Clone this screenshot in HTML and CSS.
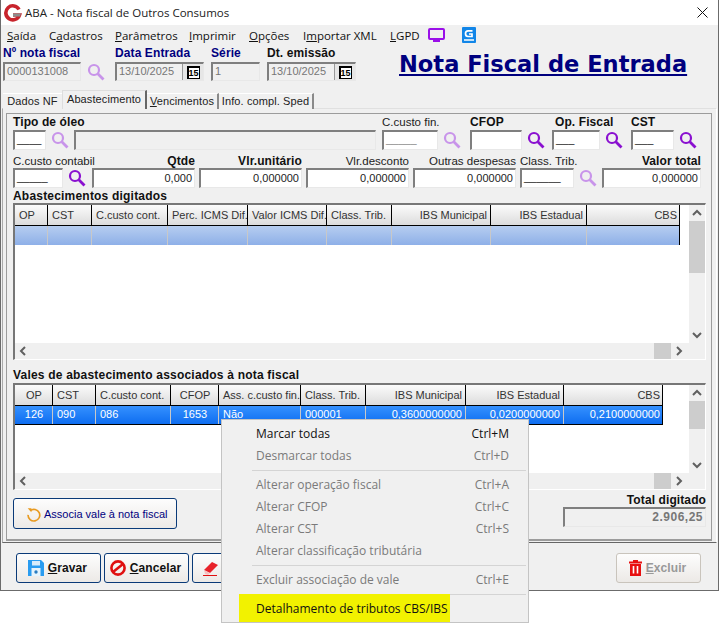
FILE: index.html
```html
<!DOCTYPE html>
<html lang="pt">
<head>
<meta charset="utf-8">
<title>ABA - Nota fiscal de Outros Consumos</title>
<link rel="stylesheet" href="styles.css">
</head>
<body>
<svg class="defs" width="0" height="0">
  <symbol id="lens" viewBox="0 0 18 18"><circle cx="7" cy="7" r="5" fill="none" stroke="currentColor" stroke-width="2.2"/><path d="M10.8 10.8 L16.5 16.5" stroke="currentColor" stroke-width="2.8" fill="none"/></symbol>
  <symbol id="up" viewBox="-3 -3 16 16"><path d="M1 7 L5 3 L9 7" fill="none" stroke="#606060" stroke-width="2"/></symbol>
  <symbol id="down" viewBox="-3 -3 16 16"><path d="M1 3 L5 7 L9 3" fill="none" stroke="#606060" stroke-width="2"/></symbol>
  <symbol id="left" viewBox="-3 -3 16 16"><path d="M7 1 L3 5 L7 9" fill="none" stroke="#606060" stroke-width="2"/></symbol>
  <symbol id="right" viewBox="-3 -3 16 16"><path d="M3 1 L7 5 L3 9" fill="none" stroke="#606060" stroke-width="2"/></symbol>
</svg>
<div class="window">
  <div class="titlebar">
    <svg class="applogo" viewBox="0 0 18 18" width="18" height="18"><path d="M15 5.5 A7 7 0 1 0 15.5 11 L9 11" fill="none" stroke="#c8242c" stroke-width="3.6"/><path d="M9 9.5 L17 9.5 L16 12.5 L9 12.5 Z" fill="#8d8d8d"/></svg>
    <span class="title-text">ABA - Nota fiscal de Outros Consumos</span>
    <svg class="close" viewBox="0 0 11 11" width="11" height="11"><path d="M0.5 0.5 L10.5 10.5 M10.5 0.5 L0.5 10.5" stroke="#111" stroke-width="1" fill="none"/></svg>
  </div>
  <nav class="menubar">
    <span class="m1"><u>S</u>aída</span>
    <span class="m2">C<u>a</u>dastros</span>
    <span class="m3"><u>P</u>arâmetros</span>
    <span class="m4"><u>I</u>mprimir</span>
    <span class="m5"><u>O</u>pções</span>
    <span class="m6">I<u>m</u>portar XML</span>
    <span class="m7"><u>L</u>GPD</span>
    <svg class="monitor" viewBox="0 0 17 14" width="17" height="14"><rect x="1" y="1" width="15" height="10" rx="1" fill="none" stroke="#9a10e8" stroke-width="2"/><path d="M5 13 H12" stroke="#9a10e8" stroke-width="2"/></svg>
    <svg class="gbook" viewBox="0 0 14 16" width="14" height="16"><rect width="14" height="16" rx="1" fill="#1286e8"/><path d="M10.5 3.8 H6 Q3.5 3.8 3.5 6.5 Q3.5 9.5 6 9.5 H10 V7 H7" fill="none" stroke="#fff" stroke-width="1.7"/><path d="M2 13 H12" stroke="#fff" stroke-width="1.5"/></svg>
  </nav>
  <header class="head">
    <div class="fld h-num"><label class="bl navy">Nº nota fiscal</label><div class="inp dis">0000131008</div></div>
    <svg class="ic light h-lens"><use href="#lens"/></svg>
    <div class="fld h-date"><label class="bl navy">Data Entrada</label><div class="inp dis datebox"><span>13/10/2025</span><b class="cal"><i>15</i></b></div></div>
    <div class="fld h-serie"><label class="bl navy">Série</label><div class="inp dis">1</div></div>
    <div class="fld h-date h-emis"><label class="bl">Dt. emissão</label><div class="inp dis datebox"><span>13/10/2025</span><b class="cal"><i>15</i></b></div></div>
    <h1 class="bigtitle">Nota Fiscal de Entrada</h1>
  </header>
  <div class="tabs">
    <span class="tab t1">Dados NF</span>
    <span class="tab t2 active">Abastecimento</span>
    <span class="tab t3"><u>V</u>encimentos</span>
    <span class="tab t4">Info. compl. Sped</span>
  </div>
  <section class="pane">
    <div class="group">
      <div class="row row1">
        <div class="fld"><label class="bl">Tipo de óleo</label><div class="inp mask">____</div></div>
        <div class="iccell"><svg class="ic light"><use href="#lens"/></svg></div>
        <div class="fld"><label class="nl">&nbsp;</label><div class="inp dis"></div></div>
        <div></div>
        <div class="fld"><label class="nl">C.custo fin.</label><div class="inp mask grayt">_____</div></div>
        <div class="iccell"><svg class="ic light"><use href="#lens"/></svg></div>
        <div class="fld"><label class="bl">CFOP</label><div class="inp"></div></div>
        <div class="iccell"><svg class="ic"><use href="#lens"/></svg></div>
        <div class="fld"><label class="bl lab-op">Op. Fiscal</label><div class="inp mask">___</div></div>
        <div class="iccell"><svg class="ic"><use href="#lens"/></svg></div>
        <div class="fld"><label class="bl">CST</label><div class="inp mask">___</div></div>
        <div class="iccell"><svg class="ic"><use href="#lens"/></svg></div>
      </div>
      <div class="row row2">
        <div class="fld"><label class="nl">C.custo contabil</label><div class="inp mask">_____</div></div>
        <div class="iccell"><svg class="ic"><use href="#lens"/></svg></div>
        <div class="fld"><label class="bl rt">Qtde</label><div class="inp num">0,000</div></div>
        <div></div>
        <div class="fld"><label class="bl rt">Vlr.unitário</label><div class="inp num">0,000000</div></div>
        <div></div>
        <div class="fld"><label class="nl rt">Vlr.desconto</label><div class="inp num">0,000000</div></div>
        <div></div>
        <div class="fld"><label class="nl rt">Outras despesas</label><div class="inp num">0,000000</div></div>
        <div></div>
        <div class="fld"><label class="nl">Class. Trib.</label><div class="inp mask">______</div></div>
        <div class="iccell"><svg class="ic light"><use href="#lens"/></svg></div>
        <div class="fld"><label class="bl rt">Valor total</label><div class="inp num">0,000000</div></div>
      </div>
      <div class="caption">Abastecimentos digitados</div>
      <div class="grid grid-a">
        <div class="gridbody">
          <div class="gr ghead cols-a">
            <span>OP</span><span>CST</span><span>C.custo cont.</span><span>Perc. ICMS Dif.</span><span>Valor ICMS Dif.</span><span>Class. Trib.</span><span class="r">IBS Municipal</span><span class="r">IBS Estadual</span><span class="r">CBS</span>
          </div>
          <div class="gr grow soft cols-a"><span></span><span></span><span></span><span></span><span></span><span></span><span></span><span></span><span></span></div>
        </div>
        <div class="vs"><svg class="ar"><use href="#up"/></svg><div class="thumb th-a"></div><div class="fill"></div><svg class="ar"><use href="#down"/></svg></div>
        <div class="hs"><svg class="ar"><use href="#left"/></svg><div class="fill"></div><div class="hthumb"></div><svg class="ar"><use href="#right"/></svg></div>
      </div>
      <div class="caption cap2">Vales de abastecimento associados à nota fiscal</div>
      <div class="grid grid-b">
        <div class="gridbody">
          <div class="gr ghead cols-b">
            <span class="c">OP</span><span>CST</span><span>C.custo cont.</span><span class="c">CFOP</span><span>Ass. c.custo fin.</span><span>Class. Trib.</span><span class="r">IBS Municipal</span><span class="r">IBS Estadual</span><span class="r">CBS</span>
          </div>
          <div class="gr grow strong cols-b">
            <span class="c">126</span><span>090</span><span>086</span><span class="c">1653</span><span>Não</span><span>000001</span><span class="r">0,3600000000</span><span class="r">0,0200000000</span><span class="r">0,2100000000</span>
          </div>
        </div>
        <div class="vs"><svg class="ar"><use href="#up"/></svg><div class="thumb th-b"></div><div class="fill"></div><svg class="ar"><use href="#down"/></svg></div>
        <div class="hs"><svg class="ar"><use href="#left"/></svg><div class="fill"></div><div class="hthumb"></div><svg class="ar"><use href="#right"/></svg></div>
      </div>
      <div class="assoc-row">
        <button class="btn assoc">
          <svg viewBox="0 0 18 18" width="15" height="18"><path d="M5 5 A7 7 0 1 1 2.5 10" fill="none" stroke="#e89a20" stroke-width="2"/><path d="M2 2 L6.5 2 L6.5 7 Z" fill="#e89a20"/></svg>
          <span>Associa vale à nota fiscal</span>
        </button>
        <div class="fld total"><label class="bl rt">Total digitado</label><div class="inp dis num totalbox">2.906,25</div></div>
      </div>
    </div>
  </section>
  <footer class="bar">
    <button class="btn act">
      <svg viewBox="0 0 16 16" width="16" height="16"><path d="M0 0 H13 L16 3 V16 H0 Z" fill="#2a9cf0"/><rect x="4" y="1" width="8" height="4.5" fill="#d8ecfa"/><rect x="3.5" y="8" width="9" height="8" fill="#e8f4fc"/><circle cx="8" cy="12" r="1.7" fill="#2a7cc0"/></svg>
      <span><u>G</u>ravar</span>
    </button>
    <button class="btn act">
      <svg viewBox="0 0 16 16" width="16" height="16"><circle cx="8" cy="8" r="6.6" fill="none" stroke="#e01010" stroke-width="2.6"/><path d="M3.3 11.8 L12.7 4.2" stroke="#e01010" stroke-width="2.6"/></svg>
      <span><u>C</u>ancelar</span>
    </button>
    <button class="btn act">
      <svg viewBox="0 0 16 16" width="16" height="16"><path d="M1 10 L9 2 L15 5 L7 13 Z" fill="#e8222a"/><path d="M1 10 L7 13 L5 15 L2 14 Z" fill="#f6c0c0"/><path d="M0 15.5 H14" stroke="#e01010"/></svg>
      <span><u>L</u>impar</span>
    </button>
    <div class="spacer"></div>
    <button class="btn act off">
      <svg viewBox="0 0 13 16" width="13" height="16"><path d="M0 1.5 H4 V0 H9 V1.5 H13 V3.5 H0 Z M1 4 H12 V16 H1 Z" fill="#e81010"/><path d="M4.5 6 V13.5 M8.5 6 V13.5" stroke="#fff" stroke-width="1.6"/></svg>
      <span><u>E</u>xcluir</span>
    </button>
  </footer>
  <div class="ctx">
    <div class="mi on"><span>Marcar todas</span><span>Ctrl+M</span></div>
    <div class="mi"><span>Desmarcar todas</span><span>Ctrl+D</span></div>
    <div class="sep"></div>
    <div class="mi"><span>Alterar operação fiscal</span><span>Ctrl+A</span></div>
    <div class="mi"><span>Alterar CFOP</span><span>Ctrl+C</span></div>
    <div class="mi"><span>Alterar CST</span><span>Ctrl+S</span></div>
    <div class="mi"><span>Alterar classificação tributária</span><span></span></div>
    <div class="sep"></div>
    <div class="mi"><span>Excluir associação de vale</span><span>Ctrl+E</span></div>
    <div class="sep"></div>
    <div class="mi on hl"><mark>Detalhamento de tributos CBS/IBS</mark></div>
  </div>
</div>
</body>
</html>
```
FILE: styles.css
```css
* { box-sizing: border-box; }
html, body { margin: 0; padding: 0; background: #fff; overflow: hidden; }
body { width: 720px; height: 627px; font-family: "Liberation Sans", Arial, sans-serif; font-size: 11px; color: #111; }
.defs { position: absolute; }
.window { position: relative; width: 719px; height: 591px; background: #f0f0f0; border: 1px solid #6b6b6b; border-top: 0; }

.titlebar { height: 25px; background: #fff; display: flex; align-items: center; padding: 0 10px 0 3px; font-family: "Open Sans", sans-serif; font-size: 11.5px; color: #222; }
.applogo { margin-right: 3px; }
.title-text { flex: 1; }

.menubar { height: 20px; display: flex; align-items: center; font-family: "Open Sans", sans-serif; font-size: 11.5px; color: #111; padding-left: 6px; }
.menubar span, .menubar svg { flex: none; }
.m1 { width: 42px; } .m2 { width: 66px; } .m3 { width: 74px; } .m4 { width: 60px; } .m5 { width: 54px; } .m6 { width: 87px; } .m7 { width: 38px; }
.monitor { margin-right: 17px; }

.head { height: 45px; display: flex; padding-top: 1px; padding-left: 2px; position: relative; }
.fld { display: flex; flex-direction: column; min-width: 0; }
label { display: block; height: 14px; line-height: 15px; white-space: nowrap; }
.bl { font-family: "Liberation Sans", sans-serif; font-weight: bold; font-size: 12px; letter-spacing: .1px; }
.nl { font-size: 11.5px; color: #222; }
.navy { color: #00007f; }
.rt { text-align: right; }
.lab-op { margin-left: 3px; }
.head label { height: 15px; line-height: 15px; }
.head .fld { gap: 1px; }
.h-num { width: 78px; }
.h-lens { margin: 17px 10px 0 6px; }
.h-date { width: 89px; margin-right: 7px; }
.h-serie { width: 49px; margin-right: 7px; }
.h-emis { margin-right: 0; }
.bigtitle { margin: 4px 0 0 43px; font-family: "DejaVu Sans", sans-serif; font-size: 22.55px; line-height: 28px; font-weight: bold; color: #00007f; text-decoration: underline; white-space: nowrap; }

.inp { height: 20px; background: #fff; border-style: solid; border-width: 2px 1px 1px 2px; border-color: #7f7f7f #e8e8e8 #e8e8e8 #7f7f7f; line-height: 17px; padding: 0 2px 0 2px; white-space: nowrap; overflow: hidden; font-size: 11px; color: #222; }
.head .inp { height: 19px; line-height: 15px; }
.inp.dis { background: #f0f0f0; color: #777; }
.inp.num { text-align: right; }
.inp.mask { line-height: 15px; }
.grayt { color: #888; }
.datebox { display: flex; justify-content: space-between; padding-right: 0; }
.cal { width: 21px; height: 16px; background: #e6e6e6; border-left: 1px solid #999; display: flex; align-items: center; justify-content: center; }
.cal i { font: bold 9px/10px "Liberation Sans", sans-serif; color: #000; background: #fff; border: 1px solid #000; border-top-width: 2px; border-left-width: 2px; width: 13px; height: 13px; text-align: center; }

.ic { width: 18px; height: 18px; color: #8a10d0; flex: none; }
.ic.light { color: #c894ea; }
.iccell { display: flex; align-items: flex-end; padding: 0 0 1px 5px; }

.tabs { height: 19px; display: flex; padding-left: 2px; position: relative; z-index: 1; font-size: 11px; letter-spacing: .1px; color: #222; white-space: nowrap; }
.tab { margin-top: 3px; height: 16px; line-height: 15px; text-align: center; background: #f0f0f0; border-right: 2px solid #8a8a8a; border-top: 1px solid #fff; }
.t1 { width: 59px; border-right: 0; }
.t2 { width: 85px; margin-top: 0; height: 19px; line-height: 16px; border-right: 2px solid #666; border-top: 1px solid #ddd; border-left: 1px solid #ddd; }
.t3 { width: 72px; }
.t4 { width: 95px; }
.pane { height: 435px; margin: 0 1px; padding: 4px 3px 2px 3px; border: 1px solid #aaa; border-top: 1px solid #e0e0e0; border-bottom: 1px solid #666; margin-top: -1px; border-right-color: #fff; }
.group { height: 428px; margin-right: 0; width: 706px; border: 1px solid #9c9c9c; border-bottom-width: 2px; padding: 1px 3px 0 6px; }

.row { display: grid; }
.row1 { grid-template-columns: 33px 28px 302px 6px 56px 32px 52px 30px 48px 31px 43px 22px; }
.row1 .iccell { padding-left: 5px; }
.row1 .fld { gap: 1px; }
.row2 { margin-top: 4px; grid-template-columns: 50px 29px 103px 4px 103px 4px 103px 4px 103px 4px 54px 28px 99px; }
.row2 .iccell { padding-left: 5px; }
.caption { height: 14px; line-height: 15px; margin-top: 1px; font-weight: bold; font-size: 12px; letter-spacing: .2px; color: #111; white-space: nowrap; }
.cap2 { margin-top: 8px; }

.grid { display: grid; width: 693px; grid-template-columns: 1fr 16px; grid-template-rows: 1fr 16px; border-top: 2px solid #777; border-left: 2px solid #777; border-right: 1px solid #fff; border-bottom: 1px solid #fff; }
.grid-a { height: 157px; }
.grid-b { height: 107px; margin-top: 1px; }
.gridbody { background: #fff; min-height: 0; overflow: hidden; }
.gr { display: grid; }
.gr span { padding: 0 3px 0 4px; white-space: nowrap; overflow: hidden; }
.cols-a { width: 665px; grid-template-columns: 33px 44px 76px 80px 79px 65px 99px 96px 93px; }
.cols-b { width: 648px; grid-template-columns: 38px 43px 75px 48px 82px 65px 100px 98px 99px; }
.ghead { height: 21px; line-height: 20px; background: linear-gradient(#fbfbfb, #dcdcdc); border-bottom: 1px solid #000; color: #333; border-right: 1px solid #000; }
.ghead span { border-right: 1px solid #000; }
.ghead span:last-child { border-right: 0; }
.grow { height: 19px; line-height: 17px; border-bottom: 1px solid #000; border-right: 1px solid #000; }
.grow span { border-right: 1px solid #c8c8c8; }
.grow span:last-child { border-right: 0; }
.soft { background: linear-gradient(#b6cdf0, #8eb0e8); border-bottom: 0; }
.strong { background: linear-gradient(#3591ff, #0e6df0); color: #fff; }
.r { text-align: right; }
.c { text-align: center; }
.vs { background: #f0f0f0; display: flex; flex-direction: column; min-height: 0; }
.hs { background: #f0f0f0; display: flex; align-items: center; padding-right: 2px; }
.ar { width: 16px; height: 16px; flex: none; }
.thumb { background: #cdcdcd; flex: none; }
.th-a { height: 52px; }
.th-b { height: 28px; }
.fill { flex: 1; }
.hthumb { width: 17px; height: 16px; background: #cdcdcd; flex: none; }

.assoc-row { display: flex; justify-content: space-between; margin-top: 8px; width: 693px; }
.btn { display: flex; align-items: center; font-family: "Liberation Sans", sans-serif; background: linear-gradient(#fdfdfd, #ece9e6); border: 1px solid #0a3a78; border-radius: 3px; padding: 0; margin: 0; }
.assoc { width: 164px; height: 31px; padding-left: 12px; gap: 3px; color: #00007f; font-size: 11px; white-space: nowrap; }
.total { width: 143px; margin-top: -5px; }
.total label { line-height: 14px; }
.totalbox { height: 20px; letter-spacing: .5px; font-size: 12px; font-weight: bold; color: #666; }

.bar { height: 46px; display: flex; gap: 3px; padding: 10px 17px 0 15px; }
.act { width: 85px; height: 30px; justify-content: center; gap: 4px; font-weight: bold; font-size: 12px; letter-spacing: .1px; color: #111; padding-right: 2px; }
.spacer { flex: 1; }
.off { border-color: #c9c4bc; color: #999; }

.ctx { position: absolute; left: 220px; top: 419px; width: 308px; height: 204px; background: #f0f0f0; border: 1px solid #c4c4c4; padding-top: 3px; font-family: "Open Sans", sans-serif; font-size: 12px; color: #7a7a7a; overflow: hidden; }
.mi { height: 22px; line-height: 22px; display: flex; justify-content: space-between; padding: 0 19px 0 34px; }
.on { color: #111; }
.sep { height: 1px; background: #d4d4d4; margin: 3px 2px 3px 30px; }
.hl { display: block; margin-top: -4px; padding: 0 0 0 17px; height: 29px; }
.hl mark { display: block; width: 211px; height: 29px; line-height: 29px; padding-left: 17px; background: #f2f200; color: #111; }
```
